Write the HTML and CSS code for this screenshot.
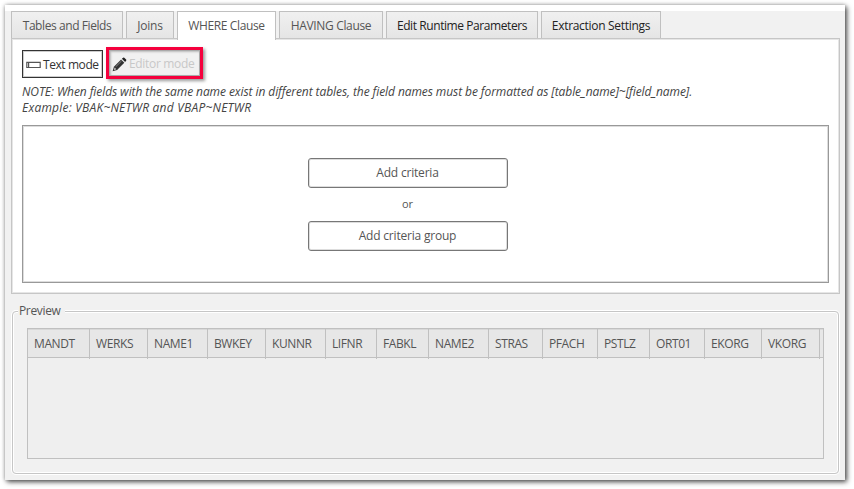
FILE: index.html
```html
<!DOCTYPE html>
<html lang="en">
<head>
<meta charset="utf-8">
<title>WHERE Clause</title>
<link rel="stylesheet" href="styles.css">
</head>
<body>
<main class="window">
  <div class="tabs">
    <div class="tab tab-tables">Tables and Fields</div>
    <div class="tab tab-joins">Joins</div>
    <div class="tab tab-where active">WHERE Clause</div>
    <div class="tab tab-having">HAVING Clause</div>
    <div class="tab tab-params dark">Edit Runtime Parameters</div>
    <div class="tab tab-settings dark">Extraction Settings</div>
  </div>
  <section class="panel">
    <div class="modes">
      <button class="mode">
        <svg width="15" height="8" viewBox="0 0 15 8"><path d="M.8 1.300H14.200V6.500H.8zM2.600 1.300V6.500" fill="none" stroke="#555" stroke-width="1.200"/></svg>
        <span class="text-label">Text mode</span>
      </button>
      <div class="highlight">
        <button class="mode disabled">
          <svg width="15" height="15" viewBox="0 0 15 15"><path d="M.6 14.300 1.900 9.700 9.100 2.500 12.300 5.700 5.100 12.900z" fill="#333"/><path d="M9.900 1.700 11.100.7Q11.700.2 12.300.8L14.100 2.600Q14.700 3.200 14.100 3.800L13.100 4.900z" fill="#222"/><path d="M2.600 10.500 4.300 12.200 2 12.900z" fill="#ddd"/><path d="M3.700 9.800 9.500 4" stroke="#aaa" stroke-width=".7"/></svg>
          <span class="editor-label">Editor mode</span>
        </button>
      </div>
    </div>
    <p class="note"><span class="note-main">NOTE: When fields with the same name exist in different tables, the field names must be formatted as [table_name]~[field_name].</span><br><span class="note-example">Example: VBAK~NETWR and VBAP~NETWR</span></p>
    <div class="criteria">
      <button class="add"><span>Add criteria</span></button>
      <span class="or">or</span>
      <button class="add"><span>Add criteria group</span></button>
    </div>
  </section>
  <section class="preview">
    <h2 class="legend">Preview</h2>
    <div class="table">
      <div class="header">
        <span>MANDT</span><span>WERKS</span><span>NAME1</span><span>BWKEY</span><span>KUNNR</span><span>LIFNR</span><span>FABKL</span><span>NAME2</span><span>STRAS</span><span>PFACH</span><span>PSTLZ</span><span>ORT01</span><span>EKORG</span><span>VKORG</span><span></span>
      </div>
    </div>
  </section>
</main>
</body>
</html>
```
FILE: styles.css
```css
* { box-sizing: border-box; }
body {
  margin: 0;
  height: 489px;
  padding: 5px 0 0 5px;
  background: #fff;
  color: #555;
  font: 12px/16px "Open Sans", "Noto Sans", sans-serif;
  overflow: hidden;
}
button { font: inherit; color: inherit; margin: 0; padding: 0; }
svg { display: block; flex: none; }
.window {
  width: 840px;
  height: 475px;
  padding: 6px 5px 0 6px;
  background: #f1f1f1;
  box-shadow: inset 0 6px #fff, 2px 2px 5px 0 rgba(0,0,0,.65), 0 0 4px rgba(0,0,0,.3);
}
.tabs { display: flex; gap: 3px; height: 27px; }
.tab {
  height: 27px;
  border: 1px solid #c0c0c0;
  border-bottom: 0;
  background: linear-gradient(#f0f0f0, #e5e5e5);
  text-align: center;
  line-height: 28px;
  white-space: nowrap;
}
.tab.active { height: 29px; background: #fff; position: relative; }
.tab.dark { color: #222; }
.tab-tables { width: 112px; letter-spacing: -.42px; }
.tab-joins { width: 48px; letter-spacing: -.2px; }
.tab-where { width: 99px; letter-spacing: -.38px; }
.tab-having { width: 104px; letter-spacing: -.34px; }
.tab-params { width: 152px; letter-spacing: -.42px; }
.tab-settings { width: 120px; letter-spacing: -.3px; }
.panel {
  width: 829px;
  height: 256px;
  padding: 8px 10px;
  border: 1px solid #c6c6c6;
  background: #fff;
  box-shadow: inset 0 0 0 1px #e6e6e6;
}
.modes { display: flex; height: 33px; gap: 3px; }
.mode {
  display: flex;
  align-items: center;
  width: 81px;
  height: 28px;
  margin-top: 3px;
  padding: 1px 0 0 3px;
  gap: 2px;
  border: 1px solid #333;
  background: #fff;
  color: #333;
  white-space: nowrap;
  box-shadow: inset 0 0 0 1px #ccc;
}
.text-label { letter-spacing: -.42px; }
.highlight {
  width: 97px;
  height: 32px;
  border: 3px solid #f5003d;
  box-shadow: 2px 2px 3px rgba(0,0,0,.4);
}
.mode.disabled {
  width: 91px;
  height: 26px;
  margin: 0;
  padding: 2px 0 0 2px;
  border-color: #aaa;
  background: #f1f1f1;
  color: #c8c8c8;
  box-shadow: inset 1px 1px 2px #bbb;
}
.editor-label { letter-spacing: -.33px; }
.note { margin: 4px 0 0; font-style: italic; white-space: nowrap; color: #444; }
.note-main { letter-spacing: -.08px; }
.note-example { letter-spacing: .22px; }
.criteria {
  display: flex;
  flex-direction: column;
  align-items: center;
  width: 807px;
  height: 158px;
  margin-top: 9px;
  padding: 32px 36px 0 0;
  border: 1px solid #999;
  box-shadow: inset 0 0 0 1px #ddd;
}
.add {
  width: 200px;
  height: 30px;
  border: 1px solid #777;
  border-radius: 3px;
  background: #fff;
  letter-spacing: -.2px;
  box-shadow: inset 0 0 0 1px #ddd;
}
.or { height: 33px; line-height: 32px; font-size: 11px; }
.preview {
  width: 827px;
  height: 163px;
  margin: 17px 0 0 1px;
  padding: 0 14px;
  border: 1px solid #c6c6c6;
  border-radius: 4px;
  box-shadow: inset 0 0 0 1px #fff, 0 0 0 1px #fff;
}
.legend {
  width: 47px;
  height: 17px;
  margin: -9px 0 0 -9px;
  padding-left: 1px;
  background: #f1f1f1;
  font: inherit;
  letter-spacing: -.35px;
}
.table {
  width: 797px;
  height: 131px;
  margin-top: 8px;
  border: 1px solid #c0c0c0;
  background: #efefef;
  overflow: hidden;
}
.header {
  display: grid;
  grid-template-columns: 62px 58px 60px 58px 60px 51px 52px 60px 54px 55px 52px 55px 57px 58px 3px;
  height: 29px;
  border-bottom: 1px solid #c0c0c0;
  background: #e7e7e7;
  line-height: 30px;
  letter-spacing: -.4px;
  box-shadow: inset 0 1px #d8d8d8;
}
.header span { padding-left: 6px; border-right: 1px solid #c0c0c0; }
.header span:last-child { padding: 0; border: 0; }
```
